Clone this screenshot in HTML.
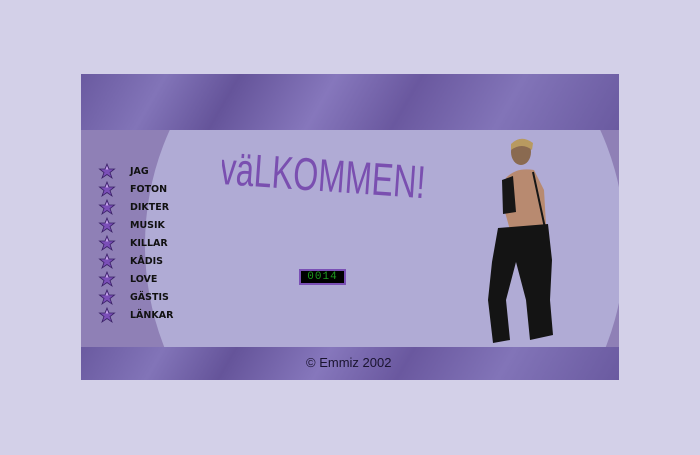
<!DOCTYPE html>
<html><head><meta charset="utf-8"><style>
html,body{margin:0;width:700px;height:455px;overflow:hidden}
body{background:#d3d0e8;position:relative;font-family:"DejaVu Sans","Liberation Sans",Verdana,sans-serif}
#box{position:absolute;left:81px;top:74px;width:538px;height:306px;background:#8c7cb6;overflow:hidden}
.band{position:absolute;left:0;width:538px;background:linear-gradient(120deg,#6a5aa0 0%,#8274b8 15%,#65549a 28%,#8677bc 45%,#6a589f 60%,#8274b8 78%,#6a5aa0 100%)}
#mid{position:absolute;left:0;top:56px;width:538px;height:217px;background:#8f80b6;overflow:hidden}
#ell{position:absolute;left:64px;top:-145px;width:480px;height:520px;border-radius:50%;background:#b0abd5}
.nav{position:absolute;left:130px;font-weight:bold;font-size:9.5px;color:#111}
</style></head><body>
<div id="box">
<div class="band" style="top:0;height:56px"></div>
<div class="band" style="top:273px;height:33px"></div>
<div id="mid"><div id="ell"></div></div>
</div>
<div style="position:absolute;left:222px;top:142px;width:210px;height:58px;overflow:hidden"><div style="font-size:46px;line-height:52px;color:#7a4fb0;font-family:'Liberation Sans',sans-serif;transform:rotate(4deg) scaleX(0.7);transform-origin:left top;white-space:nowrap">väLKOMMEN!</div></div>
<div style="position:absolute;left:299px;top:269px;width:43px;height:12px;background:#000;border:2px solid #7a4fb5;color:#1d9a20;font-family:'Liberation Mono',monospace;font-size:11px;line-height:12px;text-align:center;letter-spacing:1px">0014</div>
<svg style="position:absolute;left:0;top:0" width="700" height="455">
<defs><g id="s"><path d="M0 -7 L2 -2 L7.5 -2 L3 1.5 L5 7 L0 3.5 L-5 7 L-3 1.5 L-7.5 -2 L-2 -2Z" fill="#7b4fb8" stroke="#3a2066" stroke-width="0.8"/><path d="M0 -5 L1.5 -1.5 L-1.5 -1.5Z" fill="#c9a8ee"/></g></defs>
<use href="#s" x="107" y="171"/><use href="#s" x="107" y="189"/><use href="#s" x="107" y="207"/>
<use href="#s" x="107" y="225"/><use href="#s" x="107" y="243"/><use href="#s" x="107" y="261"/>
<use href="#s" x="107" y="279"/><use href="#s" x="107" y="297"/><use href="#s" x="107" y="315"/>
<ellipse cx="521" cy="152" rx="10" ry="13" fill="#8a6a50"/>
<path d="M511 144 Q521 134 533 143 L532 150 Q522 142 511 150Z" fill="#b89a60"/>
<path d="M506 178 Q516 167 534 170 L544 190 L546 225 L510 230 L503 205Z" fill="#b88a70"/>
<path d="M502 180 L513 176 L516 212 L503 214Z" fill="#161616"/>
<path d="M533 172 L545 228" stroke="#161616" stroke-width="2"/>
<path d="M498 228 L548 224 L552 260 L550 300 L553 335 L530 340 L526 300 L516 262 L506 300 L510 340 L493 343 L488 300 L492 262Z" fill="#141414"/>
</svg>
<span class="nav" style="top:166px">JAG</span>
<span class="nav" style="top:184px">FOTON</span>
<span class="nav" style="top:202px">DIKTER</span>
<span class="nav" style="top:220px">MUSIK</span>
<span class="nav" style="top:238px">KILLAR</span>
<span class="nav" style="top:256px">KÅDIS</span>
<span class="nav" style="top:274px">LOVE</span>
<span class="nav" style="top:292px">GÄSTIS</span>
<span class="nav" style="top:310px">LÄNKAR</span>
<div style="position:absolute;left:306px;top:355px;font-size:13px;color:#1a1430;font-family:'Liberation Sans',sans-serif">© Emmiz 2002</div>
</body></html>
